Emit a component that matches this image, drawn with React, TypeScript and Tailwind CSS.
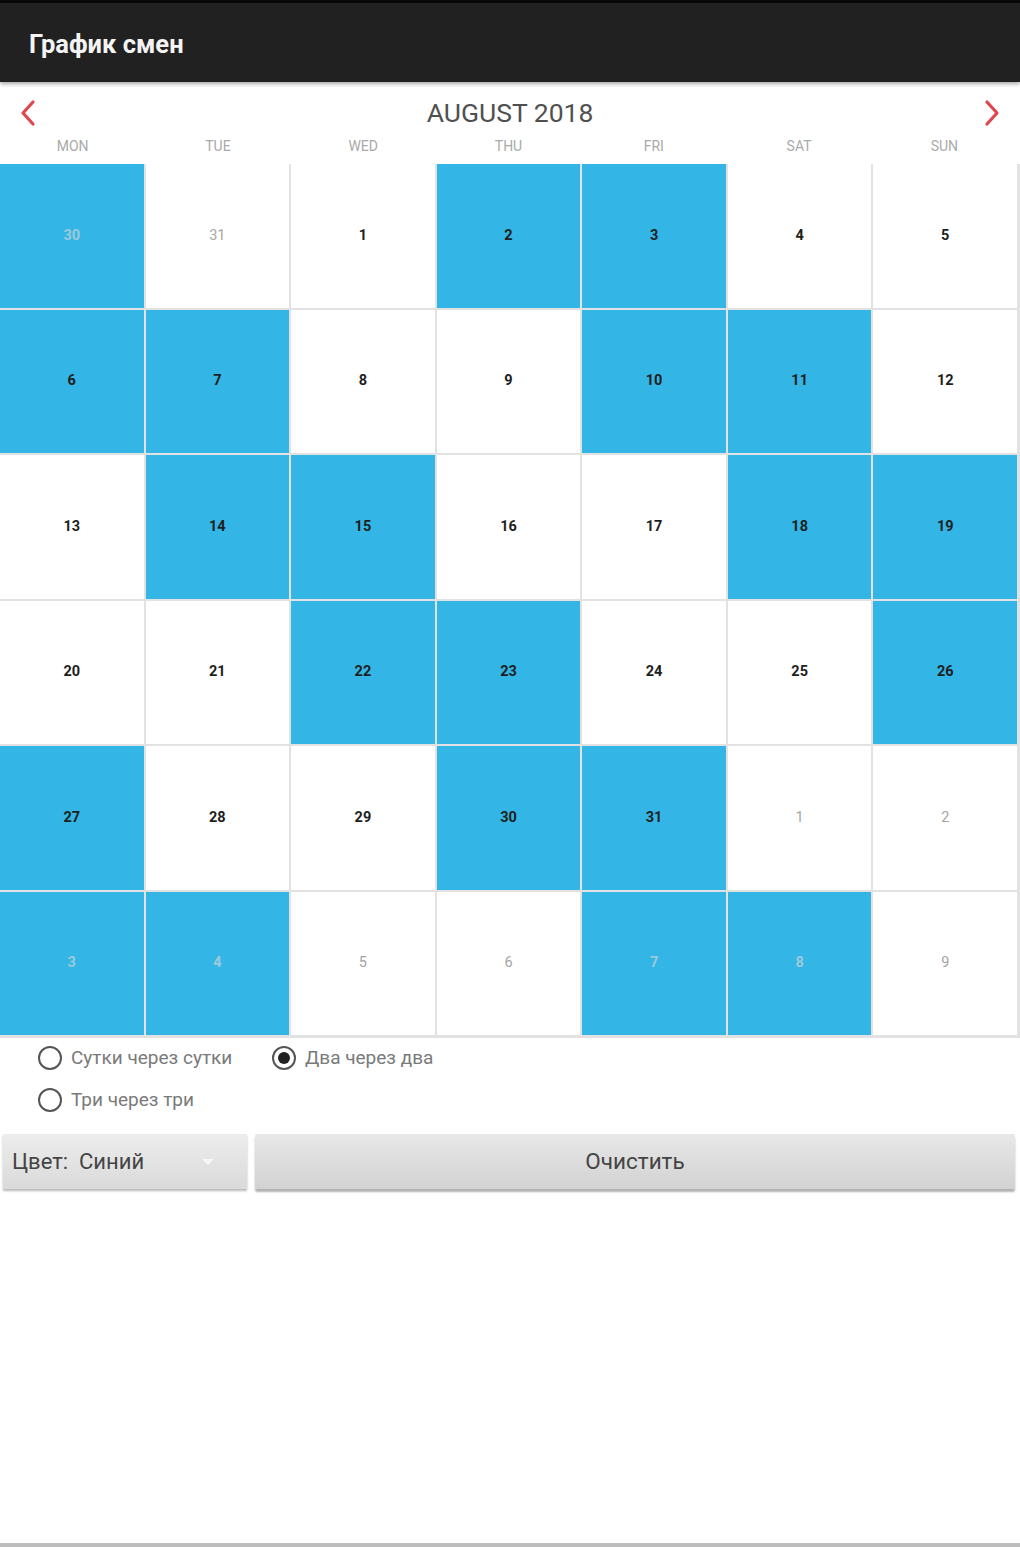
import React from "react";

type Cell = { d: number; cur: boolean; blue: boolean };

const rows: Cell[][] = [
  [
    { d: 30, cur: false, blue: true },
    { d: 31, cur: false, blue: false },
    { d: 1, cur: true, blue: false },
    { d: 2, cur: true, blue: true },
    { d: 3, cur: true, blue: true },
    { d: 4, cur: true, blue: false },
    { d: 5, cur: true, blue: false },
  ],
  [
    { d: 6, cur: true, blue: true },
    { d: 7, cur: true, blue: true },
    { d: 8, cur: true, blue: false },
    { d: 9, cur: true, blue: false },
    { d: 10, cur: true, blue: true },
    { d: 11, cur: true, blue: true },
    { d: 12, cur: true, blue: false },
  ],
  [
    { d: 13, cur: true, blue: false },
    { d: 14, cur: true, blue: true },
    { d: 15, cur: true, blue: true },
    { d: 16, cur: true, blue: false },
    { d: 17, cur: true, blue: false },
    { d: 18, cur: true, blue: true },
    { d: 19, cur: true, blue: true },
  ],
  [
    { d: 20, cur: true, blue: false },
    { d: 21, cur: true, blue: false },
    { d: 22, cur: true, blue: true },
    { d: 23, cur: true, blue: true },
    { d: 24, cur: true, blue: false },
    { d: 25, cur: true, blue: false },
    { d: 26, cur: true, blue: true },
  ],
  [
    { d: 27, cur: true, blue: true },
    { d: 28, cur: true, blue: false },
    { d: 29, cur: true, blue: false },
    { d: 30, cur: true, blue: true },
    { d: 31, cur: true, blue: true },
    { d: 1, cur: false, blue: false },
    { d: 2, cur: false, blue: false },
  ],
  [
    { d: 3, cur: false, blue: true },
    { d: 4, cur: false, blue: true },
    { d: 5, cur: false, blue: false },
    { d: 6, cur: false, blue: false },
    { d: 7, cur: false, blue: true },
    { d: 8, cur: false, blue: true },
    { d: 9, cur: false, blue: false },
  ],
];

const days = ["MON", "TUE", "WED", "THU", "FRI", "SAT", "SUN"];

function Radio({ checked }: { checked?: boolean }) {
  return (
    <span className="flex h-[24px] w-[24px] shrink-0 items-center justify-center rounded-full border-[2.5px] border-[#555]">
      {checked && <span className="h-[12px] w-[12px] rounded-full bg-[#222]" />}
    </span>
  );
}

export default function App() {
  return (
    <div
      className="flex h-[1547px] w-[1020px] flex-col bg-white"
      style={{ fontFamily: "Roboto, 'Liberation Sans', sans-serif" }}
    >
      {/* App bar */}
      <div className="relative z-10 flex h-[82px] items-center border-t-[3px] border-[#080808] bg-[#212121] pl-[29px] pt-[4px] shadow-[0_2px_4px_rgba(0,0,0,0.35)]">
        <span className="text-[25.5px] font-bold leading-none text-[#f4f4f4]">График смен</span>
      </div>

      {/* Month header */}
      <div className="flex items-center justify-between px-[19px] pt-[17px]">
        <svg width="18" height="28" viewBox="0 0 18 28" fill="none">
          <path d="M14 3 L4 14 L14 25" stroke="#e0474c" strokeWidth="3.2" strokeLinecap="round" strokeLinejoin="round" />
        </svg>
        <span className="text-[26.5px] leading-[28px] text-[#505050]">AUGUST 2018</span>
        <svg width="18" height="28" viewBox="0 0 18 28" fill="none">
          <path d="M4 3 L14 14 L4 25" stroke="#e0474c" strokeWidth="3.2" strokeLinecap="round" strokeLinejoin="round" />
        </svg>
      </div>

      {/* Day names */}
      <div className="mt-[11px] mb-[10px] grid grid-cols-7 pr-[3px]">
        {days.map((d) => (
          <span key={d} className="text-center text-[14px] leading-[16px] text-[#aaaaaa]">
            {d}
          </span>
        ))}
      </div>

      {/* Calendar grid */}
      <div className="grid grid-cols-7 gap-[2px] bg-[#e2e2e2] pr-[3px] pb-[3px]">
        {rows.flat().map((c, i) => (
          <div
            key={i}
            className={`flex h-[143.5px] items-center justify-center ${c.blue ? "bg-[#33b5e5]" : "bg-white"}`}
          >
            <span
              className={`text-[14.5px] leading-none ${
                c.cur
                  ? "font-bold text-[#1e1e1e]"
                  : c.blue
                  ? "font-bold text-[#9ec9da]"
                  : "text-[#a5a5a5]"
              }`}
            >
              {c.d}
            </span>
          </div>
        ))}
      </div>

      {/* Radio group */}
      <div className="pl-[38px] pt-[8px]">
        <div className="flex h-[24px] items-center">
          <div className="flex w-[234px] items-center gap-[9px]">
            <Radio />
            <span className="text-[19px] text-[#7a7a7a]">Сутки через сутки</span>
          </div>
          <div className="flex items-center gap-[9px]">
            <Radio checked />
            <span className="text-[19px] text-[#7a7a7a]">Два через два</span>
          </div>
        </div>
        <div className="mt-[18px] flex h-[24px] items-center gap-[9px]">
          <Radio />
          <span className="text-[19px] text-[#7a7a7a]">Три через три</span>
        </div>
      </div>

      {/* Controls */}
      <div className="mt-[22px] flex gap-[8px] pl-[3px] pr-[5px]">
        <div className="relative flex h-[55px] w-[244px] items-center bg-gradient-to-b from-[#ededed] to-[#dadada] pl-[9px] shadow-[0_2px_2px_rgba(0,0,0,0.28)]">
          <span className="text-[22px] text-[#444]">Цвет:&nbsp; Синий</span>
          <span className="absolute left-[199px] top-[25px] h-0 w-0 border-x-[6px] border-t-[6px] border-x-transparent border-t-[#f7f7f7]" />
        </div>
        <div className="flex h-[55px] flex-1 items-center justify-center rounded-[2px] bg-gradient-to-b from-[#e8e8e8] to-[#d2d2d2] shadow-[0_3px_2px_rgba(0,0,0,0.3)]">
          <span className="text-[22.5px] text-[#444]">Очистить</span>
        </div>
      </div>

      <div className="mt-auto h-[4px] bg-[#bdbdbd]" />
    </div>
  );
}
